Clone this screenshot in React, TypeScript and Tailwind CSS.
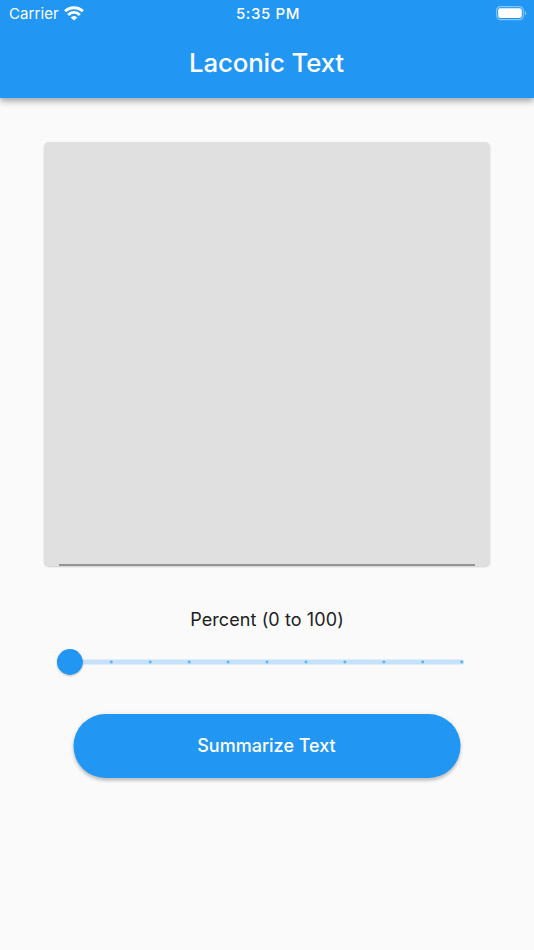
import React from "react";

const ticks = [1, 2, 3, 4, 5, 6, 7, 8, 9, 10];

function StatusBar() {
  return (
    <div className="grid h-[28px] grid-cols-3 items-center pl-[9px] pr-[7px] text-[15px] leading-[28px]">
      <div className="flex items-center gap-[5px]">
        <span className="w-[50px] whitespace-nowrap tracking-[0.1px]">Carrier</span>
        <svg width="20" height="15" viewBox="0 0 20 15" className="-mt-[2px]" fill="none" stroke="white">
          <path d="M1.1 5.3a12.7 12.7 0 0 1 17.8 0" strokeWidth="3" />
          <path d="M4.2 8.9a8.1 8.1 0 0 1 11.6 0" strokeWidth="2.8" />
          <path d="M10 14.6 6.6 11.4a4.6 4.6 0 0 1 6.8 0Z" fill="white" stroke="none" />
        </svg>
      </div>
      <span className="text-center font-medium whitespace-nowrap tracking-[0.6px]">5:35 PM</span>
      <svg width="31" height="15" viewBox="0 0 31 15" className="-mt-[2px] justify-self-end">
        <rect x="0.7" y="0.7" width="26.6" height="13" rx="3.6" fill="none" stroke="white" strokeOpacity=".45" strokeWidth="1.2" />
        <rect x="2.2" y="2.3" width="23.6" height="9.8" rx="2" fill="white" />
        <path d="M28.8 5v4.6c2-.9 2-3.7 0-4.6Z" fill="white" fillOpacity=".5" />
      </svg>
    </div>
  );
}

function PercentSlider() {
  return (
    <svg width="420" height="34" viewBox="0 0 420 34" className="block overflow-visible" role="slider" aria-valuenow={0}>
      <rect x="13" y="14.4" width="394" height="5.2" rx="2.6" fill="#c5e2fa" />
      {ticks.map((t) => (
        <circle key={t} cx={15.4 + t * 38.93} cy="17" r="1.45" fill="#2196f3" fillOpacity=".62" />
      ))}
      <circle cx="12.9" cy="17" r="12.9" fill="#2196f3" className="drop-shadow-[0_1px_1px_rgba(0,0,0,0.24)]" />
    </svg>
  );
}

export default function App() {
  return (
    <div className="flex h-[950px] w-[534px] flex-col overflow-hidden bg-[#fafafa] font-['Inter',sans-serif]">
      <header className="h-[98px] shrink-0 bg-[#2196f3] text-white shadow-[0_2px_5px_rgba(0,0,0,0.2),0_5px_6px_rgba(0,0,0,0.12),0_1px_12px_rgba(0,0,0,0.08)]">
        <StatusBar />
        <h1 className="flex h-[70px] items-center justify-center pr-[1px] text-[25.8px] font-medium whitespace-nowrap tracking-[-0.12px]">
          Laconic Text
        </h1>
      </header>
      <main className="flex flex-col items-center pt-[44px]">
        <div className="flex h-[424px] w-[446px] flex-col justify-end rounded-[5px] bg-[#e0e0e0] px-[15px] shadow-[0_1px_2px_rgba(0,0,0,0.18)]">
          <div className="h-[2px] bg-[#949494]" />
        </div>
        <p className="mt-[40px] h-[28px] text-[18px] leading-[28px] whitespace-nowrap tracking-[0.1px] text-[#212121]">
          Percent (0 to 100)
        </p>
        <div className="mt-[11px] w-[420px]">
          <PercentSlider />
        </div>
        <button className="mt-[34.5px] h-[64.5px] w-[387px] -translate-x-[0.5px] rounded-full bg-[#2196f3] text-[18px] font-medium text-white shadow-[0_3px_3px_rgba(0,0,0,0.16),0_1px_5px_rgba(0,0,0,0.12)]">
          Summarize Text
        </button>
      </main>
    </div>
  );
}
